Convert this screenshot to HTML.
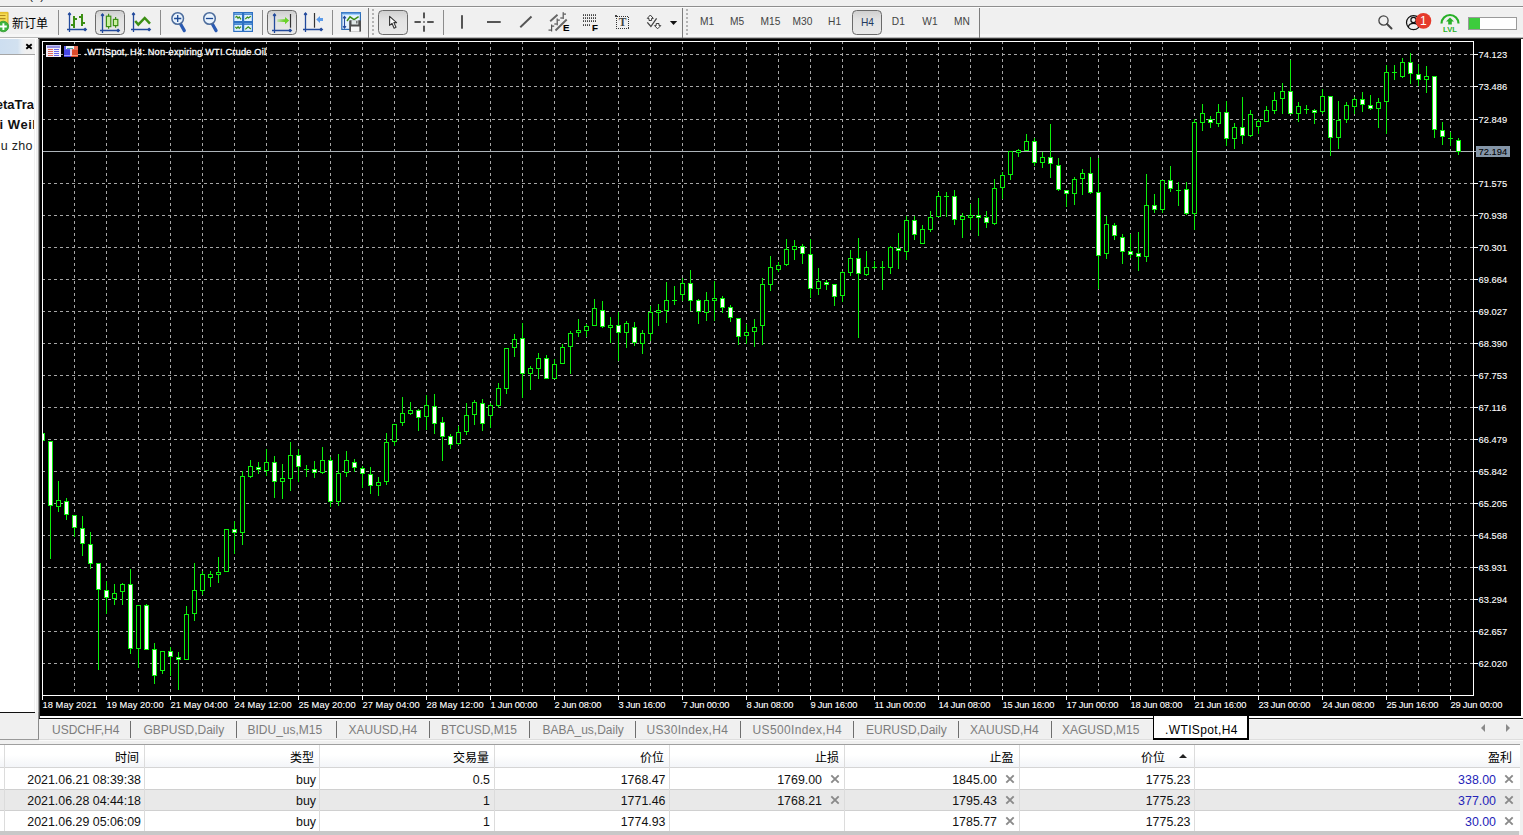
<!DOCTYPE html>
<html lang="zh"><head><meta charset="utf-8"><title>MetaTrader 4 - .WTISpot,H4</title>
<style>
html,body{margin:0;padding:0}
body{width:1523px;height:835px;overflow:hidden;background:#f0f0f0;position:relative;font-family:"Liberation Sans","Noto Sans CJK SC",sans-serif;font-size:12px;color:#000}
.abs{position:absolute}
.t{position:absolute;white-space:nowrap;line-height:1}
#chart{position:absolute;left:40px;top:39px;width:1481px;height:677px;background:#000}
#chart svg{position:absolute;left:-40px;top:-39px}
.ax{font-family:"Liberation Sans",sans-serif;font-size:9.33px;fill:#fff;stroke:#fff;stroke-width:0.1px}
.tab{position:absolute;top:724px;font-size:12px;color:#7d7d7d;white-space:nowrap;line-height:12px}
.sep{position:absolute;top:721px;width:1px;height:17px;background:#6e6e6e}
.tsep{position:absolute;top:9px;width:1px;height:28px;background:#a9a9a9}
.grip{position:absolute;top:9px;width:2px;height:27px;background:repeating-linear-gradient(to bottom,#b4b4b4 0 2px,transparent 2px 4px)}
.tf{position:absolute;top:16px;font-size:10.2px;color:#444;line-height:12px;white-space:nowrap;transform:translateX(-50%)}
.pressed{position:absolute;box-sizing:border-box;border:1.3px solid #6a6a6a;border-radius:4.5px;background:linear-gradient(#cfcfcf,#e2e2e2 35%,#e8e8e8)}
.hd{position:absolute;top:746.5px;height:22px;line-height:22px;font-size:12px;text-align:right;white-space:nowrap}
.cell{position:absolute;height:21px;line-height:21px;font-size:12.4px;text-align:right;white-space:nowrap;color:#111}
.x{position:absolute;font-size:0}
.vline{position:absolute;top:745px;width:1px;height:86px;background:#dcdcdc}
</style></head><body>

<div class="t" style="left:5px;top:-11px;font-size:12px;color:#222">文件(F)</div>
<div class="abs" style="left:0;top:6px;width:1523px;height:1px;background:#8e8e8e"></div>
<div class="abs" style="left:0;top:7px;width:1523px;height:1px;background:#fbfbfb"></div>
<div class="abs" style="left:0;top:34px;width:1523px;height:3px;background:#f6f6f6"></div>
<div class="abs" style="left:0;top:37px;width:1523px;height:1px;background:#b8b8b8"></div>
<div class="abs" style="left:38px;top:38px;width:1485px;height:1px;background:#404040"></div>
<div class="abs" style="left:0;top:38px;width:38px;height:1px;background:#fcfcfc"></div>
<div class="abs" style="left:1521px;top:39px;width:2px;height:680px;background:#fff"></div>
<div class="t" style="left:12px;top:17.500px;font-size:12px;color:#000">新订单</div>
<div class="tsep" style="left:58px;top:10px;height:25px;background:#8c8c8c"></div>
<div class="tsep" style="left:160px;top:10px;height:25px;background:#8c8c8c"></div>
<div class="tsep" style="left:262px;top:10px;height:25px;background:#8c8c8c"></div>
<div class="tsep" style="left:332px;top:10px;height:25px;background:#8c8c8c"></div>
<div class="tsep" style="left:443px;top:10px;height:25px;background:#8c8c8c"></div>
<div class="tsep" style="left:368px;top:8px;height:30px;background:#7c7c7c"></div>
<div class="tsep" style="left:682px;top:8px;height:30px;background:#7c7c7c"></div>
<div class="tsep" style="left:979px;top:8px;height:30px;background:#7c7c7c"></div>
<div class="grip" style="left:372px"></div>
<div class="grip" style="left:686px"></div>
<div class="pressed" style="left:95px;top:10px;width:30px;height:25px"></div>
<div class="pressed" style="left:267px;top:10px;width:30px;height:25px"></div>
<div class="pressed" style="left:378px;top:10px;width:30px;height:25px"></div>
<div class="pressed" style="left:852px;top:10px;width:30px;height:25px"></div>
<svg class="abs" style="left:0;top:0" width="1000" height="39" viewBox="0 0 1000 39"><path d="M-6 12.400H8V27H-6Z" fill="#f6dc55" stroke="#c9a41e" stroke-width="1"/><rect x="-2" y="12" width="10" height="1.600" fill="#e3bf2e"/><path d="M-4 15.500H5.500M-4 18.600H5.500" stroke="#b08a1c" stroke-width="1.100"/><circle cx="3.300" cy="26.500" r="5.300" fill="#3db43d" stroke="#2c962c" stroke-width="0.800"/><path d="M3.400 23.200V29.900M0 26.500H6.800" stroke="#fff" stroke-width="1.900"/><path d="M69.5 13.0V32.0M67.0 29.5H86.0" stroke="#224a9c" stroke-width="1.3" fill="none"/><path d="M69.5 11.899999999999999L71.4 14.3L69.5 16.1L67.6 14.3ZM87.3 29.5L85.1 31.4L83.1 29.5L85.1 27.6Z" fill="#224a9c"/><g fill="#3c8f14"><rect x="73" y="16" width="2" height="12"/><rect x="71" y="24" width="2" height="2"/><rect x="75" y="18" width="2" height="2"/><rect x="81" y="14" width="2" height="12"/><rect x="79" y="16" width="2" height="2"/><rect x="83" y="22" width="2" height="2"/></g><path d="M102.5 14.0V33.0M100.0 30.5H119.0" stroke="#224a9c" stroke-width="1.3" fill="none"/><path d="M102.5 12.899999999999999L104.4 15.3L102.5 17.1L100.6 15.3ZM120.3 30.5L118.1 32.4L116.1 30.5L118.1 28.6Z" fill="#224a9c"/><path d="M108.6 13.7V28.7M115.600 17V27.7" stroke="#3c8f14" stroke-width="1.2"/><rect x="106.4" y="16.2" width="4.4" height="10.400" fill="#c9f09f" stroke="#3c8f14" stroke-width="1.2"/><rect x="113.4" y="19.400" width="4.4" height="6.200" fill="#c9f09f" stroke="#3c8f14" stroke-width="1.2"/><path d="M133.5 13.0V32.0M131.0 29.5H150.0" stroke="#224a9c" stroke-width="1.3" fill="none"/><path d="M133.5 11.899999999999999L135.4 14.3L133.5 16.1L131.6 14.3ZM151.3 29.5L149.1 31.4L147.1 29.5L149.1 27.6Z" fill="#224a9c"/><path d="M135.2 21L138.3 24.600L144.7 18L150 23.600" stroke="#3c8f14" stroke-width="2.5" fill="none"/><path d="M180.7 24.2L184.29999999999998 30.6" stroke="#2a5ab2" stroke-width="3.2" stroke-linecap="round"/><circle cx="177.7" cy="18.5" r="5.800" fill="#e9f3fd" stroke="#4c6c9c" stroke-width="1.500"/><path d="M174.1 18.5H181.29999999999998M177.7 14.9V22.100" stroke="#1d4a96" stroke-width="1.3"/><path d="M212.5 24.2L216.1 30.6" stroke="#2a5ab2" stroke-width="3.2" stroke-linecap="round"/><circle cx="209.5" cy="18.5" r="5.800" fill="#e9f3fd" stroke="#4c6c9c" stroke-width="1.500"/><path d="M205.9 18.5H213.1" stroke="#1d4a96" stroke-width="1.3"/><rect x="233.2" y="12" width="19.800" height="20" fill="#2d70c2"/><rect x="234.4" y="14.8" width="7.600" height="6.2" fill="#def1ff"/><rect x="234.4" y="13.3" width="7.600" height="0.800" fill="#8cc4f4"/><rect x="244.2" y="14.8" width="7.600" height="6.2" fill="#def1ff"/><rect x="244.2" y="13.3" width="7.600" height="0.800" fill="#8cc4f4"/><rect x="234.4" y="25" width="7.600" height="5.8" fill="#def1ff"/><rect x="234.4" y="23.5" width="7.600" height="0.800" fill="#8cc4f4"/><rect x="244.2" y="25" width="7.600" height="5.8" fill="#def1ff"/><rect x="244.2" y="23.5" width="7.600" height="0.800" fill="#8cc4f4"/><path d="M235.4 17.5L236.800 16.300L238 18.200L239.300 16.900L241 19.300M245.300 19.200L247.400 17.100L248.400 18L250.800 16.200M235.400 27L236.800 28.400L238.100 26.700L239.200 28.400L241 26.600M245.300 29.400L248.200 26.700L250.800 29" stroke="#3c8f14" stroke-width="1.200" fill="none"/><path d="M274.5 14.0V33.0M272.0 30.5H291.0" stroke="#224a9c" stroke-width="1.3" fill="none"/><path d="M274.5 12.899999999999999L276.4 15.3L274.5 17.1L272.6 15.3ZM292.3 30.5L290.1 32.4L288.1 30.5L290.1 28.6Z" fill="#224a9c"/><path d="M290.5 14V27.700" stroke="#333" stroke-width="1.2"/><defs><linearGradient id="ga" x1="0" x2="1" y1="0" y2="0"><stop offset="0" stop-color="#6ad22a" stop-opacity="0.25"/><stop offset="0.6" stop-color="#6ad22a"/></linearGradient></defs><path d="M277.2 19.200H285V17L289.200 20.600L285 24.200V22H277.200Z" fill="url(#ga)"/><path d="M305.5 13.0V32.0M303.0 29.5H322.0" stroke="#224a9c" stroke-width="1.3" fill="none"/><path d="M305.5 11.899999999999999L307.4 14.3L305.5 16.1L303.6 14.3ZM323.3 29.5L321.1 31.4L319.1 29.5L321.1 27.6Z" fill="#224a9c"/><path d="M314.5 13V27.700" stroke="#333" stroke-width="1.2"/><path d="M316.200 19.500L320 16V18H323V21H320V23Z" fill="#5b9bea"/><rect x="341.800" y="12.600" width="18.600" height="16.800" fill="#e6f3ff" stroke="#2b6cb5" stroke-width="1.200"/><rect x="341.200" y="12" width="19.800" height="1.800" fill="#3a7cc8"/><rect x="342.400" y="13.800" width="17.400" height="1.300" fill="#9cd0ff"/><path d="M344.500 16.500V28M343 18.300L344.500 16.300L346 18.300M343 26.200L344.500 28.200L346 26.200" stroke="#224a9c" stroke-width="1.100" fill="none"/><path d="M347 21L350 16.800L354 19.600L358.600 16.600" stroke="#3c8f14" stroke-width="1.500" fill="none"/><rect x="349.200" y="20.200" width="11.800" height="11.500" rx="0.8" fill="#4d4d4d"/><rect x="351.500" y="20.200" width="6.800" height="4.300" fill="#dfe7e7"/><rect x="356.300" y="21" width="1.100" height="2.500" fill="#444"/><rect x="351" y="26.500" width="8.400" height="5.200" fill="#f6f6f6"/><path d="M389.600 16.400V25.400L392 23.300L394.100 28.200L396 27.300L393.900 22.600H396.600Z" fill="#fafafa" stroke="#333" stroke-width="1.100" stroke-linejoin="round"/><g fill="#555"><rect x="414.500" y="21" width="6.300" height="2"/><rect x="427.200" y="21" width="6.500" height="2"/><rect x="423" y="12.500" width="2" height="5.800"/><rect x="423" y="25.700" width="2" height="6"/><rect x="423.200" y="21.200" width="1.600" height="1.600"/></g><g fill="#555"><rect x="461" y="15.200" width="2" height="13.500"/><rect x="487" y="21" width="13.700" height="2"/></g><path d="M520.300 27.200L531.500 16.500" stroke="#555" stroke-width="1.900"/><path d="M550.200 21.200L557.500 14.700M555.500 30.500L566.700 19.500" stroke="#666" stroke-width="1.900"/><g fill="#555"><rect x="551" y="24.500" width="1.200" height="7"/><rect x="548.500" y="29.500" width="2.500" height="1.200"/><rect x="552" y="25.500" width="2.200" height="1.200"/><rect x="556.600" y="18.500" width="1.200" height="6.800"/><rect x="554.300" y="23.400" width="2.500" height="1.200"/><rect x="557.600" y="19.500" width="2.200" height="1.200"/><rect x="562.600" y="12.200" width="1.200" height="6.800"/><rect x="560.300" y="17.400" width="2.500" height="1.200"/><rect x="563.600" y="13.500" width="2.400" height="1.200"/></g><text x="563" y="30.800" font-family="Liberation Sans, sans-serif" font-weight="bold" font-size="9.7" fill="#000" stroke="#000" stroke-width="0.15">E</text><g fill="#444"><rect x="583" y="14.2" width="1" height="1.800"/><rect x="585" y="14.2" width="1" height="1.800"/><rect x="587" y="14.2" width="1" height="1.800"/><rect x="589" y="14.2" width="1" height="1.800"/><rect x="591" y="14.2" width="1" height="1.800"/><rect x="593" y="14.2" width="1" height="1.800"/><rect x="595" y="14.2" width="1" height="1.800"/><rect x="583" y="17.2" width="1" height="1.800"/><rect x="585" y="17.2" width="1" height="1.800"/><rect x="587" y="17.2" width="1" height="1.800"/><rect x="589" y="17.2" width="1" height="1.800"/><rect x="591" y="17.2" width="1" height="1.800"/><rect x="593" y="17.2" width="1" height="1.800"/><rect x="595" y="17.2" width="1" height="1.800"/><rect x="583" y="20.2" width="1" height="1.800"/><rect x="585" y="20.2" width="1" height="1.800"/><rect x="587" y="20.2" width="1" height="1.800"/><rect x="589" y="20.2" width="1" height="1.800"/><rect x="591" y="20.2" width="1" height="1.800"/><rect x="593" y="20.2" width="1" height="1.800"/><rect x="595" y="20.2" width="1" height="1.800"/><rect x="583" y="24.2" width="1" height="1.800"/><rect x="585" y="24.2" width="1" height="1.800"/><rect x="587" y="24.2" width="1" height="1.800"/><rect x="589" y="24.2" width="1" height="1.800"/></g><text x="592.100" y="30.800" font-family="Liberation Sans, sans-serif" font-weight="bold" font-size="9.7" fill="#000" stroke="#000" stroke-width="0.15">F</text><rect x="616.500" y="16.500" width="12" height="12" fill="none" stroke="#333" stroke-width="1" stroke-dasharray="1 1" shape-rendering="crispEdges"/><rect x="615" y="15" width="2" height="2" fill="#444"/><text x="622.600" y="25.900" text-anchor="middle" font-family="Liberation Serif, serif" font-weight="bold" font-size="11.500" fill="#444">T</text><path d="M647.300 22.300L650.900 26.500L656.600 18.400" stroke="#444" stroke-width="1.300" fill="none"/><path d="M650.300 15L653.300 18.400H651.600V20.500H649V18.400H647.300Z" fill="#f6f6f6" stroke="#3c3c3c" stroke-width="1"/><path d="M657.600 28.800L654.500 25.600H656.200V23.500H659V25.600H660.800Z" fill="#f6f6f6" stroke="#3c3c3c" stroke-width="1"/><path d="M669.900 21.100H677.200L673.550 25Z" fill="#111"/></svg>
<div class="tf" style="left:707px">M1</div>
<div class="tf" style="left:737px">M5</div>
<div class="tf" style="left:770.5px">M15</div>
<div class="tf" style="left:802.5px">M30</div>
<div class="tf" style="left:834.6px">H1</div>
<div class="tf" style="left:898.3px">D1</div>
<div class="tf" style="left:930px">W1</div>
<div class="tf" style="left:962px">MN</div>
<div class="tf" style="left:867.5px;top:17px;color:#1f3a5f">H4</div>
<svg class="abs" style="left:1376px;top:13px" width="18" height="18" viewBox="0 0 18 18">
<circle cx="7.5" cy="7.5" r="4.6" fill="none" stroke="#444" stroke-width="1.3"/><path d="M11 11L15.5 15.5" stroke="#444" stroke-width="2" stroke-linecap="round"/></svg>
<svg class="abs" style="left:1404px;top:11px" width="30" height="22" viewBox="0 0 30 22">
<circle cx="9.5" cy="11.6" r="7" fill="#f0f0f0" stroke="#111" stroke-width="1.2"/>
<circle cx="9.5" cy="9" r="2.6" fill="none" stroke="#111" stroke-width="1.2"/>
<path d="M4.3 16C5 13 7 12.3 9.5 12.3S14 13 14.7 16" fill="none" stroke="#111" stroke-width="1.2"/>
<circle cx="19.4" cy="9.8" r="7.9" fill="#e53a2b"/>
<text x="19.4" y="14.2" text-anchor="middle" font-family="Liberation Sans, sans-serif" font-size="12" fill="#fff">1</text>
</svg>
<svg class="abs" style="left:1439px;top:12px" width="22" height="21" viewBox="0 0 22 21">
<path d="M2.5 11.5A8.5 8.5 0 0 1 19.5 11.500" fill="none" stroke="#27b027" stroke-width="2.2"/>
<path d="M11 5.5L15 9.5H12.8V12.5H9.2V9.500H7Z" fill="#27b027"/>
<text x="11" y="20" text-anchor="middle" font-family="Liberation Sans, sans-serif" font-weight="bold" font-size="7.6" fill="#27b027">LVL</text>
</svg>
<div class="abs" style="left:1468px;top:17px;width:49px;height:13px;box-sizing:border-box;border:1px solid #9a9a9a;background:#fff"><div style="width:11px;height:11px;background:#3dcc3d"></div></div>
<div class="abs" style="left:0;top:39px;width:34px;height:673px;background:#fff"></div>
<div class="abs" style="left:35px;top:39px;width:1px;height:673px;background:#fff"></div>
<div class="abs" style="left:38px;top:39px;width:1px;height:673px;background:#a0a0a0"></div>
<div class="abs" style="left:39px;top:39px;width:1px;height:679px;background:#404040"></div>
<div class="abs" style="left:0;top:39px;width:34px;height:15px;background:linear-gradient(to right,#cddef0 0,#d2e1f0 52%,#e8eef4 64%,#f0f0f0 76%)"></div>
<div class="abs" style="left:0;top:54px;width:35px;height:1px;background:#a6a6a6"></div>
<svg class="abs" style="left:25px;top:43px" width="8" height="7" viewBox="0 0 8 7"><path d="M1.300 1.200L6.700 5.800M6.700 1.200L1.300 5.800" stroke="#000" stroke-width="1.900"/></svg>
<div class="abs" style="left:0;top:712px;width:35px;height:1px;background:#111"></div>
<div class="abs" style="left:38px;top:712px;width:1px;height:28px;background:#8a8a8a"></div>
<div class="abs" style="left:0;top:739px;width:39px;height:1px;background:#9a9a9a"></div>
<div class="abs" style="left:0;top:39px;width:34px;height:673px;overflow:hidden"><div class="t" style="right:0;top:59px;font-weight:bold;font-size:13px;color:#111">etaTra</div><div class="t" style="right:-2.500px;top:79px;font-weight:bold;font-size:13px;letter-spacing:0.55px;color:#111">i Weil</div><div class="t" style="right:1.300px;top:100.500px;font-size:12.5px;letter-spacing:0.25px;color:#222">u zho</div></div>
<div id="chart"><svg width="1523" height="835" viewBox="0 0 1523 835">
<g stroke="#a6a6a6" stroke-width="1" stroke-dasharray="3 3" shape-rendering="crispEdges">
<line x1="74.5" y1="41" x2="74.5" y2="695"/>
<line x1="106.5" y1="41" x2="106.5" y2="695"/>
<line x1="138.5" y1="41" x2="138.5" y2="695"/>
<line x1="170.5" y1="41" x2="170.5" y2="695"/>
<line x1="202.5" y1="41" x2="202.5" y2="695"/>
<line x1="234.5" y1="41" x2="234.5" y2="695"/>
<line x1="266.5" y1="41" x2="266.5" y2="695"/>
<line x1="298.5" y1="41" x2="298.5" y2="695"/>
<line x1="330.5" y1="41" x2="330.5" y2="695"/>
<line x1="362.5" y1="41" x2="362.5" y2="695"/>
<line x1="394.5" y1="41" x2="394.5" y2="695"/>
<line x1="426.5" y1="41" x2="426.5" y2="695"/>
<line x1="458.5" y1="41" x2="458.5" y2="695"/>
<line x1="490.5" y1="41" x2="490.5" y2="695"/>
<line x1="522.5" y1="41" x2="522.5" y2="695"/>
<line x1="554.5" y1="41" x2="554.5" y2="695"/>
<line x1="586.5" y1="41" x2="586.5" y2="695"/>
<line x1="618.5" y1="41" x2="618.5" y2="695"/>
<line x1="650.5" y1="41" x2="650.5" y2="695"/>
<line x1="682.5" y1="41" x2="682.5" y2="695"/>
<line x1="714.5" y1="41" x2="714.5" y2="695"/>
<line x1="746.5" y1="41" x2="746.5" y2="695"/>
<line x1="778.5" y1="41" x2="778.5" y2="695"/>
<line x1="810.5" y1="41" x2="810.5" y2="695"/>
<line x1="842.5" y1="41" x2="842.5" y2="695"/>
<line x1="874.5" y1="41" x2="874.5" y2="695"/>
<line x1="906.5" y1="41" x2="906.5" y2="695"/>
<line x1="938.5" y1="41" x2="938.5" y2="695"/>
<line x1="970.5" y1="41" x2="970.5" y2="695"/>
<line x1="1002.5" y1="41" x2="1002.5" y2="695"/>
<line x1="1034.5" y1="41" x2="1034.5" y2="695"/>
<line x1="1066.5" y1="41" x2="1066.5" y2="695"/>
<line x1="1098.5" y1="41" x2="1098.5" y2="695"/>
<line x1="1130.5" y1="41" x2="1130.5" y2="695"/>
<line x1="1162.5" y1="41" x2="1162.5" y2="695"/>
<line x1="1194.5" y1="41" x2="1194.5" y2="695"/>
<line x1="1226.5" y1="41" x2="1226.5" y2="695"/>
<line x1="1258.5" y1="41" x2="1258.5" y2="695"/>
<line x1="1290.5" y1="41" x2="1290.5" y2="695"/>
<line x1="1322.5" y1="41" x2="1322.5" y2="695"/>
<line x1="1354.5" y1="41" x2="1354.5" y2="695"/>
<line x1="1386.5" y1="41" x2="1386.5" y2="695"/>
<line x1="1418.5" y1="41" x2="1418.5" y2="695"/>
<line x1="1450.5" y1="41" x2="1450.5" y2="695"/>
<line x1="42" y1="54.5" x2="1473" y2="54.5"/>
<line x1="42" y1="86.5" x2="1473" y2="86.5"/>
<line x1="42" y1="119.5" x2="1473" y2="119.5"/>
<line x1="42" y1="151.5" x2="1473" y2="151.5"/>
<line x1="42" y1="183.5" x2="1473" y2="183.5"/>
<line x1="42" y1="215.5" x2="1473" y2="215.5"/>
<line x1="42" y1="247.5" x2="1473" y2="247.5"/>
<line x1="42" y1="279.5" x2="1473" y2="279.5"/>
<line x1="42" y1="311.5" x2="1473" y2="311.5"/>
<line x1="42" y1="343.5" x2="1473" y2="343.5"/>
<line x1="42" y1="375.5" x2="1473" y2="375.5"/>
<line x1="42" y1="407.5" x2="1473" y2="407.5"/>
<line x1="42" y1="439.5" x2="1473" y2="439.5"/>
<line x1="42" y1="471.5" x2="1473" y2="471.5"/>
<line x1="42" y1="503.5" x2="1473" y2="503.5"/>
<line x1="42" y1="535.5" x2="1473" y2="535.5"/>
<line x1="42" y1="567.5" x2="1473" y2="567.5"/>
<line x1="42" y1="599.5" x2="1473" y2="599.5"/>
<line x1="42" y1="631.5" x2="1473" y2="631.5"/>
<line x1="42" y1="663.5" x2="1473" y2="663.5"/>
</g>
<rect x="43" y="151" width="1433" height="1" fill="#adb3b9" shape-rendering="crispEdges"/>
<g shape-rendering="crispEdges">
<rect x="42" y="433" width="1" height="8" fill="#0bef0b"/>
<rect x="42" y="433" width="3" height="8" fill="#0bef0b"/>
<rect x="43" y="434" width="1" height="6" fill="#fff"/>
<rect x="50" y="441" width="1" height="118" fill="#0bef0b"/>
<rect x="48" y="441" width="5" height="65" fill="#0bef0b"/>
<rect x="49" y="442" width="3" height="63" fill="#fff"/>
<rect x="58" y="481" width="1" height="31" fill="#0bef0b"/>
<rect x="56" y="500" width="5" height="7" fill="#0bef0b"/>
<rect x="57" y="501" width="3" height="5" fill="#000"/>
<rect x="66" y="498" width="1" height="22" fill="#0bef0b"/>
<rect x="64" y="501" width="5" height="14" fill="#0bef0b"/>
<rect x="65" y="502" width="3" height="12" fill="#fff"/>
<rect x="74" y="515" width="1" height="22" fill="#0bef0b"/>
<rect x="72" y="515" width="5" height="13" fill="#0bef0b"/>
<rect x="73" y="516" width="3" height="11" fill="#fff"/>
<rect x="82" y="516" width="1" height="40" fill="#0bef0b"/>
<rect x="80" y="528" width="5" height="16" fill="#0bef0b"/>
<rect x="81" y="529" width="3" height="14" fill="#fff"/>
<rect x="90" y="532" width="1" height="37" fill="#0bef0b"/>
<rect x="88" y="544" width="5" height="20" fill="#0bef0b"/>
<rect x="89" y="545" width="3" height="18" fill="#fff"/>
<rect x="98" y="563" width="1" height="107" fill="#0bef0b"/>
<rect x="96" y="563" width="5" height="27" fill="#0bef0b"/>
<rect x="97" y="564" width="3" height="25" fill="#fff"/>
<rect x="106" y="581" width="1" height="33" fill="#0bef0b"/>
<rect x="104" y="590" width="5" height="8" fill="#0bef0b"/>
<rect x="105" y="591" width="3" height="6" fill="#fff"/>
<rect x="114" y="584" width="1" height="21" fill="#0bef0b"/>
<rect x="112" y="593" width="5" height="6" fill="#0bef0b"/>
<rect x="113" y="594" width="3" height="4" fill="#000"/>
<rect x="122" y="583" width="1" height="22" fill="#0bef0b"/>
<rect x="120" y="584" width="5" height="8" fill="#0bef0b"/>
<rect x="121" y="585" width="3" height="6" fill="#000"/>
<rect x="130" y="569" width="1" height="85" fill="#0bef0b"/>
<rect x="128" y="584" width="5" height="65" fill="#0bef0b"/>
<rect x="129" y="585" width="3" height="63" fill="#fff"/>
<rect x="138" y="605" width="1" height="63" fill="#0bef0b"/>
<rect x="136" y="605" width="5" height="44" fill="#0bef0b"/>
<rect x="137" y="606" width="3" height="42" fill="#000"/>
<rect x="146" y="604" width="1" height="46" fill="#0bef0b"/>
<rect x="144" y="605" width="5" height="45" fill="#0bef0b"/>
<rect x="145" y="606" width="3" height="43" fill="#fff"/>
<rect x="154" y="643" width="1" height="41" fill="#0bef0b"/>
<rect x="152" y="649" width="5" height="27" fill="#0bef0b"/>
<rect x="153" y="650" width="3" height="25" fill="#fff"/>
<rect x="162" y="651" width="1" height="23" fill="#0bef0b"/>
<rect x="160" y="651" width="5" height="20" fill="#0bef0b"/>
<rect x="161" y="652" width="3" height="18" fill="#000"/>
<rect x="170" y="647" width="1" height="29" fill="#0bef0b"/>
<rect x="168" y="651" width="5" height="6" fill="#0bef0b"/>
<rect x="169" y="652" width="3" height="4" fill="#fff"/>
<rect x="178" y="652" width="1" height="38" fill="#0bef0b"/>
<rect x="176" y="657" width="5" height="3" fill="#0bef0b"/>
<rect x="177" y="658" width="3" height="1" fill="#fff"/>
<rect x="186" y="606" width="1" height="54" fill="#0bef0b"/>
<rect x="184" y="614" width="5" height="46" fill="#0bef0b"/>
<rect x="185" y="615" width="3" height="44" fill="#000"/>
<rect x="194" y="563" width="1" height="58" fill="#0bef0b"/>
<rect x="192" y="590" width="5" height="24" fill="#0bef0b"/>
<rect x="193" y="591" width="3" height="22" fill="#000"/>
<rect x="202" y="571" width="1" height="24" fill="#0bef0b"/>
<rect x="200" y="574" width="5" height="17" fill="#0bef0b"/>
<rect x="201" y="575" width="3" height="15" fill="#000"/>
<rect x="210" y="571" width="1" height="16" fill="#0bef0b"/>
<rect x="208" y="574" width="5" height="4" fill="#0bef0b"/>
<rect x="209" y="575" width="3" height="2" fill="#000"/>
<rect x="218" y="557" width="1" height="26" fill="#0bef0b"/>
<rect x="216" y="572" width="5" height="3" fill="#0bef0b"/>
<rect x="217" y="573" width="3" height="1" fill="#000"/>
<rect x="226" y="529" width="1" height="43" fill="#0bef0b"/>
<rect x="224" y="529" width="5" height="43" fill="#0bef0b"/>
<rect x="225" y="530" width="3" height="41" fill="#000"/>
<rect x="234" y="521" width="1" height="33" fill="#0bef0b"/>
<rect x="232" y="529" width="5" height="4" fill="#0bef0b"/>
<rect x="233" y="530" width="3" height="2" fill="#fff"/>
<rect x="242" y="471" width="1" height="74" fill="#0bef0b"/>
<rect x="240" y="476" width="5" height="57" fill="#0bef0b"/>
<rect x="241" y="477" width="3" height="55" fill="#000"/>
<rect x="250" y="460" width="1" height="18" fill="#0bef0b"/>
<rect x="248" y="466" width="5" height="11" fill="#0bef0b"/>
<rect x="249" y="467" width="3" height="9" fill="#000"/>
<rect x="258" y="462" width="1" height="12" fill="#0bef0b"/>
<rect x="256" y="467" width="5" height="3" fill="#0bef0b"/>
<rect x="257" y="468" width="3" height="1" fill="#fff"/>
<rect x="266" y="449" width="1" height="27" fill="#0bef0b"/>
<rect x="264" y="462" width="5" height="9" fill="#0bef0b"/>
<rect x="265" y="463" width="3" height="7" fill="#000"/>
<rect x="274" y="456" width="1" height="42" fill="#0bef0b"/>
<rect x="272" y="462" width="5" height="20" fill="#0bef0b"/>
<rect x="273" y="463" width="3" height="18" fill="#fff"/>
<rect x="282" y="464" width="1" height="35" fill="#0bef0b"/>
<rect x="280" y="478" width="5" height="4" fill="#0bef0b"/>
<rect x="281" y="479" width="3" height="2" fill="#000"/>
<rect x="290" y="442" width="1" height="49" fill="#0bef0b"/>
<rect x="288" y="455" width="5" height="24" fill="#0bef0b"/>
<rect x="289" y="456" width="3" height="22" fill="#000"/>
<rect x="298" y="449" width="1" height="33" fill="#0bef0b"/>
<rect x="296" y="455" width="5" height="12" fill="#0bef0b"/>
<rect x="297" y="456" width="3" height="10" fill="#fff"/>
<rect x="306" y="465" width="1" height="12" fill="#0bef0b"/>
<rect x="304" y="469" width="5" height="1" fill="#0bef0b"/>
<rect x="314" y="461" width="1" height="17" fill="#0bef0b"/>
<rect x="312" y="469" width="5" height="4" fill="#0bef0b"/>
<rect x="313" y="470" width="3" height="2" fill="#fff"/>
<rect x="322" y="447" width="1" height="27" fill="#0bef0b"/>
<rect x="320" y="460" width="5" height="13" fill="#0bef0b"/>
<rect x="321" y="461" width="3" height="11" fill="#000"/>
<rect x="330" y="457" width="1" height="50" fill="#0bef0b"/>
<rect x="328" y="460" width="5" height="42" fill="#0bef0b"/>
<rect x="329" y="461" width="3" height="40" fill="#fff"/>
<rect x="338" y="454" width="1" height="52" fill="#0bef0b"/>
<rect x="336" y="473" width="5" height="29" fill="#0bef0b"/>
<rect x="337" y="474" width="3" height="27" fill="#000"/>
<rect x="346" y="451" width="1" height="26" fill="#0bef0b"/>
<rect x="344" y="460" width="5" height="13" fill="#0bef0b"/>
<rect x="345" y="461" width="3" height="11" fill="#000"/>
<rect x="354" y="459" width="1" height="13" fill="#0bef0b"/>
<rect x="352" y="462" width="5" height="6" fill="#0bef0b"/>
<rect x="353" y="463" width="3" height="4" fill="#fff"/>
<rect x="362" y="466" width="1" height="22" fill="#0bef0b"/>
<rect x="360" y="468" width="5" height="6" fill="#0bef0b"/>
<rect x="361" y="469" width="3" height="4" fill="#fff"/>
<rect x="370" y="467" width="1" height="27" fill="#0bef0b"/>
<rect x="368" y="474" width="5" height="12" fill="#0bef0b"/>
<rect x="369" y="475" width="3" height="10" fill="#fff"/>
<rect x="378" y="477" width="1" height="19" fill="#0bef0b"/>
<rect x="376" y="482" width="5" height="4" fill="#0bef0b"/>
<rect x="377" y="483" width="3" height="2" fill="#000"/>
<rect x="386" y="433" width="1" height="52" fill="#0bef0b"/>
<rect x="384" y="442" width="5" height="40" fill="#0bef0b"/>
<rect x="385" y="443" width="3" height="38" fill="#000"/>
<rect x="394" y="424" width="1" height="22" fill="#0bef0b"/>
<rect x="392" y="424" width="5" height="18" fill="#0bef0b"/>
<rect x="393" y="425" width="3" height="16" fill="#000"/>
<rect x="402" y="397" width="1" height="29" fill="#0bef0b"/>
<rect x="400" y="413" width="5" height="10" fill="#0bef0b"/>
<rect x="401" y="414" width="3" height="8" fill="#000"/>
<rect x="410" y="402" width="1" height="13" fill="#0bef0b"/>
<rect x="408" y="410" width="5" height="4" fill="#0bef0b"/>
<rect x="409" y="411" width="3" height="2" fill="#000"/>
<rect x="418" y="409" width="1" height="22" fill="#0bef0b"/>
<rect x="416" y="410" width="5" height="8" fill="#0bef0b"/>
<rect x="417" y="411" width="3" height="6" fill="#fff"/>
<rect x="426" y="395" width="1" height="35" fill="#0bef0b"/>
<rect x="424" y="405" width="5" height="12" fill="#0bef0b"/>
<rect x="425" y="406" width="3" height="10" fill="#000"/>
<rect x="434" y="394" width="1" height="40" fill="#0bef0b"/>
<rect x="432" y="406" width="5" height="18" fill="#0bef0b"/>
<rect x="433" y="407" width="3" height="16" fill="#fff"/>
<rect x="442" y="417" width="1" height="44" fill="#0bef0b"/>
<rect x="440" y="422" width="5" height="15" fill="#0bef0b"/>
<rect x="441" y="423" width="3" height="13" fill="#fff"/>
<rect x="450" y="434" width="1" height="15" fill="#0bef0b"/>
<rect x="448" y="436" width="5" height="9" fill="#0bef0b"/>
<rect x="449" y="437" width="3" height="7" fill="#fff"/>
<rect x="458" y="426" width="1" height="19" fill="#0bef0b"/>
<rect x="456" y="432" width="5" height="12" fill="#0bef0b"/>
<rect x="457" y="433" width="3" height="10" fill="#000"/>
<rect x="466" y="403" width="1" height="32" fill="#0bef0b"/>
<rect x="464" y="415" width="5" height="17" fill="#0bef0b"/>
<rect x="465" y="416" width="3" height="15" fill="#000"/>
<rect x="474" y="400" width="1" height="25" fill="#0bef0b"/>
<rect x="472" y="402" width="5" height="13" fill="#0bef0b"/>
<rect x="473" y="403" width="3" height="11" fill="#000"/>
<rect x="482" y="399" width="1" height="32" fill="#0bef0b"/>
<rect x="480" y="403" width="5" height="21" fill="#0bef0b"/>
<rect x="481" y="404" width="3" height="19" fill="#fff"/>
<rect x="490" y="403" width="1" height="25" fill="#0bef0b"/>
<rect x="488" y="405" width="5" height="11" fill="#0bef0b"/>
<rect x="489" y="406" width="3" height="9" fill="#000"/>
<rect x="498" y="383" width="1" height="25" fill="#0bef0b"/>
<rect x="496" y="388" width="5" height="18" fill="#0bef0b"/>
<rect x="497" y="389" width="3" height="16" fill="#000"/>
<rect x="506" y="348" width="1" height="46" fill="#0bef0b"/>
<rect x="504" y="348" width="5" height="41" fill="#0bef0b"/>
<rect x="505" y="349" width="3" height="39" fill="#000"/>
<rect x="514" y="334" width="1" height="23" fill="#0bef0b"/>
<rect x="512" y="339" width="5" height="9" fill="#0bef0b"/>
<rect x="513" y="340" width="3" height="7" fill="#000"/>
<rect x="522" y="323" width="1" height="75" fill="#0bef0b"/>
<rect x="520" y="338" width="5" height="36" fill="#0bef0b"/>
<rect x="521" y="339" width="3" height="34" fill="#fff"/>
<rect x="530" y="366" width="1" height="24" fill="#0bef0b"/>
<rect x="528" y="368" width="5" height="6" fill="#0bef0b"/>
<rect x="529" y="369" width="3" height="4" fill="#000"/>
<rect x="538" y="353" width="1" height="26" fill="#0bef0b"/>
<rect x="536" y="358" width="5" height="11" fill="#0bef0b"/>
<rect x="537" y="359" width="3" height="9" fill="#000"/>
<rect x="546" y="355" width="1" height="24" fill="#0bef0b"/>
<rect x="544" y="358" width="5" height="21" fill="#0bef0b"/>
<rect x="545" y="359" width="3" height="19" fill="#fff"/>
<rect x="554" y="359" width="1" height="20" fill="#0bef0b"/>
<rect x="552" y="364" width="5" height="15" fill="#0bef0b"/>
<rect x="553" y="365" width="3" height="13" fill="#000"/>
<rect x="562" y="344" width="1" height="20" fill="#0bef0b"/>
<rect x="560" y="347" width="5" height="17" fill="#0bef0b"/>
<rect x="561" y="348" width="3" height="15" fill="#000"/>
<rect x="570" y="331" width="1" height="43" fill="#0bef0b"/>
<rect x="568" y="333" width="5" height="14" fill="#0bef0b"/>
<rect x="569" y="334" width="3" height="12" fill="#000"/>
<rect x="578" y="319" width="1" height="18" fill="#0bef0b"/>
<rect x="576" y="330" width="5" height="3" fill="#0bef0b"/>
<rect x="577" y="331" width="3" height="1" fill="#000"/>
<rect x="586" y="324" width="1" height="13" fill="#0bef0b"/>
<rect x="584" y="326" width="5" height="5" fill="#0bef0b"/>
<rect x="585" y="327" width="3" height="3" fill="#000"/>
<rect x="594" y="299" width="1" height="27" fill="#0bef0b"/>
<rect x="592" y="308" width="5" height="18" fill="#0bef0b"/>
<rect x="593" y="309" width="3" height="16" fill="#000"/>
<rect x="602" y="301" width="1" height="27" fill="#0bef0b"/>
<rect x="600" y="310" width="5" height="17" fill="#0bef0b"/>
<rect x="601" y="311" width="3" height="15" fill="#fff"/>
<rect x="610" y="317" width="1" height="26" fill="#0bef0b"/>
<rect x="608" y="325" width="5" height="3" fill="#0bef0b"/>
<rect x="609" y="326" width="3" height="1" fill="#000"/>
<rect x="618" y="312" width="1" height="49" fill="#0bef0b"/>
<rect x="616" y="325" width="5" height="8" fill="#0bef0b"/>
<rect x="617" y="326" width="3" height="6" fill="#fff"/>
<rect x="626" y="321" width="1" height="27" fill="#0bef0b"/>
<rect x="624" y="323" width="5" height="10" fill="#0bef0b"/>
<rect x="625" y="324" width="3" height="8" fill="#000"/>
<rect x="634" y="322" width="1" height="24" fill="#0bef0b"/>
<rect x="632" y="327" width="5" height="16" fill="#0bef0b"/>
<rect x="633" y="328" width="3" height="14" fill="#fff"/>
<rect x="642" y="330" width="1" height="24" fill="#0bef0b"/>
<rect x="640" y="333" width="5" height="11" fill="#0bef0b"/>
<rect x="641" y="334" width="3" height="9" fill="#000"/>
<rect x="650" y="306" width="1" height="35" fill="#0bef0b"/>
<rect x="648" y="312" width="5" height="22" fill="#0bef0b"/>
<rect x="649" y="313" width="3" height="20" fill="#000"/>
<rect x="658" y="304" width="1" height="22" fill="#0bef0b"/>
<rect x="656" y="310" width="5" height="3" fill="#0bef0b"/>
<rect x="657" y="311" width="3" height="1" fill="#000"/>
<rect x="666" y="282" width="1" height="41" fill="#0bef0b"/>
<rect x="664" y="300" width="5" height="11" fill="#0bef0b"/>
<rect x="665" y="301" width="3" height="9" fill="#000"/>
<rect x="674" y="286" width="1" height="19" fill="#0bef0b"/>
<rect x="672" y="300" width="5" height="1" fill="#0bef0b"/>
<rect x="682" y="278" width="1" height="23" fill="#0bef0b"/>
<rect x="680" y="283" width="5" height="12" fill="#0bef0b"/>
<rect x="681" y="284" width="3" height="10" fill="#000"/>
<rect x="690" y="270" width="1" height="41" fill="#0bef0b"/>
<rect x="688" y="283" width="5" height="18" fill="#0bef0b"/>
<rect x="689" y="284" width="3" height="16" fill="#fff"/>
<rect x="698" y="299" width="1" height="25" fill="#0bef0b"/>
<rect x="696" y="300" width="5" height="12" fill="#0bef0b"/>
<rect x="697" y="301" width="3" height="10" fill="#fff"/>
<rect x="706" y="292" width="1" height="29" fill="#0bef0b"/>
<rect x="704" y="300" width="5" height="13" fill="#0bef0b"/>
<rect x="705" y="301" width="3" height="11" fill="#000"/>
<rect x="714" y="281" width="1" height="40" fill="#0bef0b"/>
<rect x="712" y="298" width="5" height="3" fill="#0bef0b"/>
<rect x="713" y="299" width="3" height="1" fill="#000"/>
<rect x="722" y="296" width="1" height="17" fill="#0bef0b"/>
<rect x="720" y="298" width="5" height="10" fill="#0bef0b"/>
<rect x="721" y="299" width="3" height="8" fill="#fff"/>
<rect x="730" y="305" width="1" height="17" fill="#0bef0b"/>
<rect x="728" y="307" width="5" height="11" fill="#0bef0b"/>
<rect x="729" y="308" width="3" height="9" fill="#fff"/>
<rect x="738" y="318" width="1" height="27" fill="#0bef0b"/>
<rect x="736" y="318" width="5" height="19" fill="#0bef0b"/>
<rect x="737" y="319" width="3" height="17" fill="#fff"/>
<rect x="746" y="324" width="1" height="20" fill="#0bef0b"/>
<rect x="744" y="332" width="5" height="4" fill="#0bef0b"/>
<rect x="745" y="333" width="3" height="2" fill="#000"/>
<rect x="754" y="319" width="1" height="28" fill="#0bef0b"/>
<rect x="752" y="327" width="5" height="5" fill="#0bef0b"/>
<rect x="753" y="328" width="3" height="3" fill="#000"/>
<rect x="762" y="278" width="1" height="67" fill="#0bef0b"/>
<rect x="760" y="284" width="5" height="42" fill="#0bef0b"/>
<rect x="761" y="285" width="3" height="40" fill="#000"/>
<rect x="770" y="256" width="1" height="35" fill="#0bef0b"/>
<rect x="768" y="267" width="5" height="18" fill="#0bef0b"/>
<rect x="769" y="268" width="3" height="16" fill="#000"/>
<rect x="778" y="262" width="1" height="10" fill="#0bef0b"/>
<rect x="776" y="265" width="5" height="5" fill="#0bef0b"/>
<rect x="777" y="266" width="3" height="3" fill="#000"/>
<rect x="786" y="239" width="1" height="27" fill="#0bef0b"/>
<rect x="784" y="249" width="5" height="16" fill="#0bef0b"/>
<rect x="785" y="250" width="3" height="14" fill="#000"/>
<rect x="794" y="240" width="1" height="20" fill="#0bef0b"/>
<rect x="792" y="246" width="5" height="4" fill="#0bef0b"/>
<rect x="793" y="247" width="3" height="2" fill="#000"/>
<rect x="802" y="244" width="1" height="20" fill="#0bef0b"/>
<rect x="800" y="246" width="5" height="8" fill="#0bef0b"/>
<rect x="801" y="247" width="3" height="6" fill="#fff"/>
<rect x="810" y="239" width="1" height="59" fill="#0bef0b"/>
<rect x="808" y="254" width="5" height="35" fill="#0bef0b"/>
<rect x="809" y="255" width="3" height="33" fill="#fff"/>
<rect x="818" y="268" width="1" height="27" fill="#0bef0b"/>
<rect x="816" y="281" width="5" height="8" fill="#0bef0b"/>
<rect x="817" y="282" width="3" height="6" fill="#000"/>
<rect x="826" y="280" width="1" height="10" fill="#0bef0b"/>
<rect x="824" y="282" width="5" height="3" fill="#0bef0b"/>
<rect x="825" y="283" width="3" height="1" fill="#fff"/>
<rect x="834" y="284" width="1" height="22" fill="#0bef0b"/>
<rect x="832" y="284" width="5" height="13" fill="#0bef0b"/>
<rect x="833" y="285" width="3" height="11" fill="#fff"/>
<rect x="842" y="271" width="1" height="31" fill="#0bef0b"/>
<rect x="840" y="272" width="5" height="24" fill="#0bef0b"/>
<rect x="841" y="273" width="3" height="22" fill="#000"/>
<rect x="850" y="250" width="1" height="26" fill="#0bef0b"/>
<rect x="848" y="258" width="5" height="15" fill="#0bef0b"/>
<rect x="849" y="259" width="3" height="13" fill="#000"/>
<rect x="858" y="238" width="1" height="100" fill="#0bef0b"/>
<rect x="856" y="258" width="5" height="16" fill="#0bef0b"/>
<rect x="857" y="259" width="3" height="14" fill="#fff"/>
<rect x="866" y="251" width="1" height="25" fill="#0bef0b"/>
<rect x="864" y="267" width="5" height="8" fill="#0bef0b"/>
<rect x="865" y="268" width="3" height="6" fill="#000"/>
<rect x="874" y="261" width="1" height="8" fill="#0bef0b"/>
<rect x="872" y="267" width="5" height="1" fill="#0bef0b"/>
<rect x="882" y="261" width="1" height="29" fill="#0bef0b"/>
<rect x="880" y="267" width="5" height="1" fill="#0bef0b"/>
<rect x="890" y="246" width="1" height="28" fill="#0bef0b"/>
<rect x="888" y="247" width="5" height="21" fill="#0bef0b"/>
<rect x="889" y="248" width="3" height="19" fill="#000"/>
<rect x="898" y="233" width="1" height="36" fill="#0bef0b"/>
<rect x="896" y="248" width="5" height="3" fill="#0bef0b"/>
<rect x="897" y="249" width="3" height="1" fill="#fff"/>
<rect x="906" y="216" width="1" height="44" fill="#0bef0b"/>
<rect x="904" y="220" width="5" height="32" fill="#0bef0b"/>
<rect x="905" y="221" width="3" height="30" fill="#000"/>
<rect x="914" y="216" width="1" height="24" fill="#0bef0b"/>
<rect x="912" y="220" width="5" height="15" fill="#0bef0b"/>
<rect x="913" y="221" width="3" height="13" fill="#fff"/>
<rect x="922" y="225" width="1" height="19" fill="#0bef0b"/>
<rect x="920" y="229" width="5" height="15" fill="#0bef0b"/>
<rect x="921" y="230" width="3" height="13" fill="#000"/>
<rect x="930" y="211" width="1" height="21" fill="#0bef0b"/>
<rect x="928" y="217" width="5" height="13" fill="#0bef0b"/>
<rect x="929" y="218" width="3" height="11" fill="#000"/>
<rect x="938" y="192" width="1" height="25" fill="#0bef0b"/>
<rect x="936" y="196" width="5" height="21" fill="#0bef0b"/>
<rect x="937" y="197" width="3" height="19" fill="#000"/>
<rect x="946" y="192" width="1" height="25" fill="#0bef0b"/>
<rect x="944" y="196" width="5" height="1" fill="#0bef0b"/>
<rect x="954" y="190" width="1" height="35" fill="#0bef0b"/>
<rect x="952" y="196" width="5" height="24" fill="#0bef0b"/>
<rect x="953" y="197" width="3" height="22" fill="#fff"/>
<rect x="962" y="213" width="1" height="25" fill="#0bef0b"/>
<rect x="960" y="216" width="5" height="4" fill="#0bef0b"/>
<rect x="961" y="217" width="3" height="2" fill="#000"/>
<rect x="970" y="204" width="1" height="26" fill="#0bef0b"/>
<rect x="968" y="215" width="5" height="3" fill="#0bef0b"/>
<rect x="969" y="216" width="3" height="1" fill="#000"/>
<rect x="978" y="198" width="1" height="38" fill="#0bef0b"/>
<rect x="976" y="215" width="5" height="3" fill="#0bef0b"/>
<rect x="977" y="216" width="3" height="1" fill="#fff"/>
<rect x="986" y="211" width="1" height="17" fill="#0bef0b"/>
<rect x="984" y="217" width="5" height="6" fill="#0bef0b"/>
<rect x="985" y="218" width="3" height="4" fill="#fff"/>
<rect x="994" y="179" width="1" height="46" fill="#0bef0b"/>
<rect x="992" y="188" width="5" height="36" fill="#0bef0b"/>
<rect x="993" y="189" width="3" height="34" fill="#000"/>
<rect x="1002" y="172" width="1" height="27" fill="#0bef0b"/>
<rect x="1000" y="175" width="5" height="13" fill="#0bef0b"/>
<rect x="1001" y="176" width="3" height="11" fill="#000"/>
<rect x="1010" y="151" width="1" height="29" fill="#0bef0b"/>
<rect x="1008" y="151" width="5" height="24" fill="#0bef0b"/>
<rect x="1009" y="152" width="3" height="22" fill="#000"/>
<rect x="1018" y="149" width="1" height="8" fill="#0bef0b"/>
<rect x="1016" y="150" width="5" height="3" fill="#0bef0b"/>
<rect x="1017" y="151" width="3" height="1" fill="#000"/>
<rect x="1026" y="134" width="1" height="17" fill="#0bef0b"/>
<rect x="1024" y="141" width="5" height="10" fill="#0bef0b"/>
<rect x="1025" y="142" width="3" height="8" fill="#000"/>
<rect x="1034" y="138" width="1" height="28" fill="#0bef0b"/>
<rect x="1032" y="141" width="5" height="22" fill="#0bef0b"/>
<rect x="1033" y="142" width="3" height="20" fill="#fff"/>
<rect x="1042" y="152" width="1" height="16" fill="#0bef0b"/>
<rect x="1040" y="157" width="5" height="6" fill="#0bef0b"/>
<rect x="1041" y="158" width="3" height="4" fill="#000"/>
<rect x="1050" y="124" width="1" height="54" fill="#0bef0b"/>
<rect x="1048" y="157" width="5" height="7" fill="#0bef0b"/>
<rect x="1049" y="158" width="3" height="5" fill="#fff"/>
<rect x="1058" y="158" width="1" height="33" fill="#0bef0b"/>
<rect x="1056" y="165" width="5" height="25" fill="#0bef0b"/>
<rect x="1057" y="166" width="3" height="23" fill="#fff"/>
<rect x="1066" y="190" width="1" height="17" fill="#0bef0b"/>
<rect x="1064" y="190" width="5" height="4" fill="#0bef0b"/>
<rect x="1065" y="191" width="3" height="2" fill="#fff"/>
<rect x="1074" y="177" width="1" height="28" fill="#0bef0b"/>
<rect x="1072" y="179" width="5" height="15" fill="#0bef0b"/>
<rect x="1073" y="180" width="3" height="13" fill="#000"/>
<rect x="1082" y="169" width="1" height="26" fill="#0bef0b"/>
<rect x="1080" y="173" width="5" height="6" fill="#0bef0b"/>
<rect x="1081" y="174" width="3" height="4" fill="#000"/>
<rect x="1090" y="157" width="1" height="37" fill="#0bef0b"/>
<rect x="1088" y="173" width="5" height="20" fill="#0bef0b"/>
<rect x="1089" y="174" width="3" height="18" fill="#fff"/>
<rect x="1098" y="158" width="1" height="131" fill="#0bef0b"/>
<rect x="1096" y="192" width="5" height="64" fill="#0bef0b"/>
<rect x="1097" y="193" width="3" height="62" fill="#fff"/>
<rect x="1106" y="216" width="1" height="43" fill="#0bef0b"/>
<rect x="1104" y="224" width="5" height="30" fill="#0bef0b"/>
<rect x="1105" y="225" width="3" height="28" fill="#000"/>
<rect x="1114" y="223" width="1" height="17" fill="#0bef0b"/>
<rect x="1112" y="225" width="5" height="11" fill="#0bef0b"/>
<rect x="1113" y="226" width="3" height="9" fill="#fff"/>
<rect x="1122" y="234" width="1" height="30" fill="#0bef0b"/>
<rect x="1120" y="237" width="5" height="15" fill="#0bef0b"/>
<rect x="1121" y="238" width="3" height="13" fill="#fff"/>
<rect x="1130" y="234" width="1" height="24" fill="#0bef0b"/>
<rect x="1128" y="251" width="5" height="4" fill="#0bef0b"/>
<rect x="1129" y="252" width="3" height="2" fill="#fff"/>
<rect x="1138" y="232" width="1" height="39" fill="#0bef0b"/>
<rect x="1136" y="253" width="5" height="4" fill="#0bef0b"/>
<rect x="1137" y="254" width="3" height="2" fill="#fff"/>
<rect x="1146" y="174" width="1" height="88" fill="#0bef0b"/>
<rect x="1144" y="205" width="5" height="52" fill="#0bef0b"/>
<rect x="1145" y="206" width="3" height="50" fill="#000"/>
<rect x="1154" y="194" width="1" height="19" fill="#0bef0b"/>
<rect x="1152" y="205" width="5" height="5" fill="#0bef0b"/>
<rect x="1153" y="206" width="3" height="3" fill="#fff"/>
<rect x="1162" y="180" width="1" height="33" fill="#0bef0b"/>
<rect x="1160" y="180" width="5" height="30" fill="#0bef0b"/>
<rect x="1161" y="181" width="3" height="28" fill="#000"/>
<rect x="1170" y="166" width="1" height="26" fill="#0bef0b"/>
<rect x="1168" y="180" width="5" height="9" fill="#0bef0b"/>
<rect x="1169" y="181" width="3" height="7" fill="#fff"/>
<rect x="1178" y="182" width="1" height="24" fill="#0bef0b"/>
<rect x="1176" y="190" width="5" height="1" fill="#0bef0b"/>
<rect x="1186" y="182" width="1" height="33" fill="#0bef0b"/>
<rect x="1184" y="189" width="5" height="25" fill="#0bef0b"/>
<rect x="1185" y="190" width="3" height="23" fill="#fff"/>
<rect x="1194" y="119" width="1" height="111" fill="#0bef0b"/>
<rect x="1192" y="122" width="5" height="92" fill="#0bef0b"/>
<rect x="1193" y="123" width="3" height="90" fill="#000"/>
<rect x="1202" y="104" width="1" height="27" fill="#0bef0b"/>
<rect x="1200" y="113" width="5" height="10" fill="#0bef0b"/>
<rect x="1201" y="114" width="3" height="8" fill="#000"/>
<rect x="1210" y="116" width="1" height="12" fill="#0bef0b"/>
<rect x="1208" y="119" width="5" height="4" fill="#0bef0b"/>
<rect x="1209" y="120" width="3" height="2" fill="#fff"/>
<rect x="1218" y="104" width="1" height="23" fill="#0bef0b"/>
<rect x="1216" y="112" width="5" height="12" fill="#0bef0b"/>
<rect x="1217" y="113" width="3" height="10" fill="#000"/>
<rect x="1226" y="101" width="1" height="45" fill="#0bef0b"/>
<rect x="1224" y="112" width="5" height="27" fill="#0bef0b"/>
<rect x="1225" y="113" width="3" height="25" fill="#fff"/>
<rect x="1234" y="123" width="1" height="26" fill="#0bef0b"/>
<rect x="1232" y="127" width="5" height="12" fill="#0bef0b"/>
<rect x="1233" y="128" width="3" height="10" fill="#000"/>
<rect x="1242" y="97" width="1" height="47" fill="#0bef0b"/>
<rect x="1240" y="127" width="5" height="9" fill="#0bef0b"/>
<rect x="1241" y="128" width="3" height="7" fill="#fff"/>
<rect x="1250" y="110" width="1" height="27" fill="#0bef0b"/>
<rect x="1248" y="114" width="5" height="22" fill="#0bef0b"/>
<rect x="1249" y="115" width="3" height="20" fill="#000"/>
<rect x="1258" y="119" width="1" height="15" fill="#0bef0b"/>
<rect x="1256" y="121" width="5" height="6" fill="#0bef0b"/>
<rect x="1257" y="122" width="3" height="4" fill="#000"/>
<rect x="1266" y="106" width="1" height="16" fill="#0bef0b"/>
<rect x="1264" y="110" width="5" height="12" fill="#0bef0b"/>
<rect x="1265" y="111" width="3" height="10" fill="#000"/>
<rect x="1274" y="92" width="1" height="22" fill="#0bef0b"/>
<rect x="1272" y="100" width="5" height="11" fill="#0bef0b"/>
<rect x="1273" y="101" width="3" height="9" fill="#000"/>
<rect x="1282" y="83" width="1" height="31" fill="#0bef0b"/>
<rect x="1280" y="91" width="5" height="8" fill="#0bef0b"/>
<rect x="1281" y="92" width="3" height="6" fill="#000"/>
<rect x="1290" y="60" width="1" height="54" fill="#0bef0b"/>
<rect x="1288" y="91" width="5" height="23" fill="#0bef0b"/>
<rect x="1289" y="92" width="3" height="21" fill="#fff"/>
<rect x="1298" y="102" width="1" height="20" fill="#0bef0b"/>
<rect x="1296" y="106" width="5" height="8" fill="#0bef0b"/>
<rect x="1297" y="107" width="3" height="6" fill="#000"/>
<rect x="1306" y="105" width="1" height="9" fill="#0bef0b"/>
<rect x="1304" y="109" width="5" height="1" fill="#0bef0b"/>
<rect x="1314" y="109" width="1" height="15" fill="#0bef0b"/>
<rect x="1312" y="110" width="5" height="3" fill="#0bef0b"/>
<rect x="1313" y="111" width="3" height="1" fill="#fff"/>
<rect x="1322" y="89" width="1" height="25" fill="#0bef0b"/>
<rect x="1320" y="96" width="5" height="16" fill="#0bef0b"/>
<rect x="1321" y="97" width="3" height="14" fill="#000"/>
<rect x="1330" y="96" width="1" height="60" fill="#0bef0b"/>
<rect x="1328" y="96" width="5" height="42" fill="#0bef0b"/>
<rect x="1329" y="97" width="3" height="40" fill="#fff"/>
<rect x="1338" y="101" width="1" height="48" fill="#0bef0b"/>
<rect x="1336" y="120" width="5" height="18" fill="#0bef0b"/>
<rect x="1337" y="121" width="3" height="16" fill="#000"/>
<rect x="1346" y="102" width="1" height="21" fill="#0bef0b"/>
<rect x="1344" y="105" width="5" height="15" fill="#0bef0b"/>
<rect x="1345" y="106" width="3" height="13" fill="#000"/>
<rect x="1354" y="97" width="1" height="17" fill="#0bef0b"/>
<rect x="1352" y="99" width="5" height="8" fill="#0bef0b"/>
<rect x="1353" y="100" width="3" height="6" fill="#000"/>
<rect x="1362" y="92" width="1" height="20" fill="#0bef0b"/>
<rect x="1360" y="99" width="5" height="6" fill="#0bef0b"/>
<rect x="1361" y="100" width="3" height="4" fill="#fff"/>
<rect x="1370" y="95" width="1" height="15" fill="#0bef0b"/>
<rect x="1368" y="105" width="5" height="4" fill="#0bef0b"/>
<rect x="1369" y="106" width="3" height="2" fill="#fff"/>
<rect x="1378" y="98" width="1" height="30" fill="#0bef0b"/>
<rect x="1376" y="102" width="5" height="7" fill="#0bef0b"/>
<rect x="1377" y="103" width="3" height="5" fill="#000"/>
<rect x="1386" y="65" width="1" height="69" fill="#0bef0b"/>
<rect x="1384" y="72" width="5" height="30" fill="#0bef0b"/>
<rect x="1385" y="73" width="3" height="28" fill="#000"/>
<rect x="1394" y="65" width="1" height="15" fill="#0bef0b"/>
<rect x="1392" y="72" width="5" height="1" fill="#0bef0b"/>
<rect x="1402" y="58" width="1" height="20" fill="#0bef0b"/>
<rect x="1400" y="62" width="5" height="15" fill="#0bef0b"/>
<rect x="1401" y="63" width="3" height="13" fill="#000"/>
<rect x="1410" y="53" width="1" height="31" fill="#0bef0b"/>
<rect x="1408" y="62" width="5" height="12" fill="#0bef0b"/>
<rect x="1409" y="63" width="3" height="10" fill="#fff"/>
<rect x="1418" y="64" width="1" height="22" fill="#0bef0b"/>
<rect x="1416" y="74" width="5" height="6" fill="#0bef0b"/>
<rect x="1417" y="75" width="3" height="4" fill="#fff"/>
<rect x="1426" y="66" width="1" height="27" fill="#0bef0b"/>
<rect x="1424" y="76" width="5" height="4" fill="#0bef0b"/>
<rect x="1425" y="77" width="3" height="2" fill="#000"/>
<rect x="1434" y="76" width="1" height="62" fill="#0bef0b"/>
<rect x="1432" y="76" width="5" height="54" fill="#0bef0b"/>
<rect x="1433" y="77" width="3" height="52" fill="#fff"/>
<rect x="1442" y="122" width="1" height="23" fill="#0bef0b"/>
<rect x="1440" y="130" width="5" height="7" fill="#0bef0b"/>
<rect x="1441" y="131" width="3" height="5" fill="#fff"/>
<rect x="1450" y="132" width="1" height="14" fill="#0bef0b"/>
<rect x="1448" y="138" width="5" height="1" fill="#0bef0b"/>
<rect x="1458" y="138" width="1" height="17" fill="#0bef0b"/>
<rect x="1456" y="140" width="5" height="12" fill="#0bef0b"/>
<rect x="1457" y="141" width="3" height="10" fill="#fff"/>
</g>
<g fill="#fff" shape-rendering="crispEdges">
<rect x="42" y="41" width="1432" height="1"/><rect x="42" y="41" width="1" height="655"/>
<rect x="1473" y="41" width="1" height="655"/><rect x="42" y="695" width="1432" height="1"/>
<rect x="1474" y="54" width="4" height="1"/>
<rect x="1474" y="86" width="4" height="1"/>
<rect x="1474" y="119" width="4" height="1"/>
<rect x="1474" y="183" width="4" height="1"/>
<rect x="1474" y="215" width="4" height="1"/>
<rect x="1474" y="247" width="4" height="1"/>
<rect x="1474" y="279" width="4" height="1"/>
<rect x="1474" y="311" width="4" height="1"/>
<rect x="1474" y="343" width="4" height="1"/>
<rect x="1474" y="375" width="4" height="1"/>
<rect x="1474" y="407" width="4" height="1"/>
<rect x="1474" y="439" width="4" height="1"/>
<rect x="1474" y="471" width="4" height="1"/>
<rect x="1474" y="503" width="4" height="1"/>
<rect x="1474" y="535" width="4" height="1"/>
<rect x="1474" y="567" width="4" height="1"/>
<rect x="1474" y="599" width="4" height="1"/>
<rect x="1474" y="631" width="4" height="1"/>
<rect x="1474" y="663" width="4" height="1"/>
<rect x="42" y="696" width="1" height="4"/>
<rect x="106" y="696" width="1" height="4"/>
<rect x="170" y="696" width="1" height="4"/>
<rect x="234" y="696" width="1" height="4"/>
<rect x="298" y="696" width="1" height="4"/>
<rect x="362" y="696" width="1" height="4"/>
<rect x="426" y="696" width="1" height="4"/>
<rect x="490" y="696" width="1" height="4"/>
<rect x="554" y="696" width="1" height="4"/>
<rect x="618" y="696" width="1" height="4"/>
<rect x="682" y="696" width="1" height="4"/>
<rect x="746" y="696" width="1" height="4"/>
<rect x="810" y="696" width="1" height="4"/>
<rect x="874" y="696" width="1" height="4"/>
<rect x="938" y="696" width="1" height="4"/>
<rect x="1002" y="696" width="1" height="4"/>
<rect x="1066" y="696" width="1" height="4"/>
<rect x="1130" y="696" width="1" height="4"/>
<rect x="1194" y="696" width="1" height="4"/>
<rect x="1258" y="696" width="1" height="4"/>
<rect x="1322" y="696" width="1" height="4"/>
<rect x="1386" y="696" width="1" height="4"/>
<rect x="1450" y="696" width="1" height="4"/>
</g>
<text class="ax" x="1478.6" y="58">74.123</text>
<text class="ax" x="1478.6" y="90">73.486</text>
<text class="ax" x="1478.6" y="123">72.849</text>
<text class="ax" x="1478.6" y="187">71.575</text>
<text class="ax" x="1478.6" y="219">70.938</text>
<text class="ax" x="1478.6" y="251">70.301</text>
<text class="ax" x="1478.6" y="283">69.664</text>
<text class="ax" x="1478.6" y="315">69.027</text>
<text class="ax" x="1478.6" y="347">68.390</text>
<text class="ax" x="1478.6" y="379">67.753</text>
<text class="ax" x="1478.6" y="411">67.116</text>
<text class="ax" x="1478.6" y="443">66.479</text>
<text class="ax" x="1478.6" y="475">65.842</text>
<text class="ax" x="1478.6" y="507">65.205</text>
<text class="ax" x="1478.6" y="539">64.568</text>
<text class="ax" x="1478.6" y="571">63.931</text>
<text class="ax" x="1478.6" y="603">63.294</text>
<text class="ax" x="1478.6" y="635">62.657</text>
<text class="ax" x="1478.6" y="667">62.020</text>
<rect x="1476" y="146" width="34" height="11" fill="#8596a8"/>
<text class="ax" x="1478.6" y="155" style="fill:#000;stroke:#000">72.194</text>
<text class="ax" x="42.4" y="708" style="letter-spacing:0.07px">18 May 2021</text>
<text class="ax" x="106.4" y="708" style="letter-spacing:0.07px">19 May 20:00</text>
<text class="ax" x="170.4" y="708" style="letter-spacing:0.07px">21 May 04:00</text>
<text class="ax" x="234.4" y="708" style="letter-spacing:0.07px">24 May 12:00</text>
<text class="ax" x="298.4" y="708" style="letter-spacing:0.07px">25 May 20:00</text>
<text class="ax" x="362.4" y="708" style="letter-spacing:0.07px">27 May 04:00</text>
<text class="ax" x="426.4" y="708" style="letter-spacing:0.07px">28 May 12:00</text>
<text class="ax" x="490.4" y="708" style="letter-spacing:-0.17px">1 Jun 00:00</text>
<text class="ax" x="554.4" y="708" style="letter-spacing:-0.17px">2 Jun 08:00</text>
<text class="ax" x="618.4" y="708" style="letter-spacing:-0.17px">3 Jun 16:00</text>
<text class="ax" x="682.4" y="708" style="letter-spacing:-0.17px">7 Jun 00:00</text>
<text class="ax" x="746.4" y="708" style="letter-spacing:-0.17px">8 Jun 08:00</text>
<text class="ax" x="810.4" y="708" style="letter-spacing:-0.17px">9 Jun 16:00</text>
<text class="ax" x="874.4" y="708" style="letter-spacing:-0.17px">11 Jun 00:00</text>
<text class="ax" x="938.4" y="708" style="letter-spacing:-0.17px">14 Jun 08:00</text>
<text class="ax" x="1002.4" y="708" style="letter-spacing:-0.17px">15 Jun 16:00</text>
<text class="ax" x="1066.4" y="708" style="letter-spacing:-0.17px">17 Jun 00:00</text>
<text class="ax" x="1130.4" y="708" style="letter-spacing:-0.17px">18 Jun 08:00</text>
<text class="ax" x="1194.4" y="708" style="letter-spacing:-0.17px">21 Jun 16:00</text>
<text class="ax" x="1258.4" y="708" style="letter-spacing:-0.17px">23 Jun 00:00</text>
<text class="ax" x="1322.4" y="708" style="letter-spacing:-0.17px">24 Jun 08:00</text>
<text class="ax" x="1386.4" y="708" style="letter-spacing:-0.17px">25 Jun 16:00</text>
<text class="ax" x="1450.4" y="708" style="letter-spacing:-0.17px">29 Jun 00:00</text>
<g shape-rendering="crispEdges">
<rect x="46" y="45" width="15" height="12" fill="#f3eef8"/>
<rect x="47" y="45" width="13" height="1" fill="#c4c2f2"/>
<rect x="47" y="46" width="13" height="2" fill="#938fe0"/>
<rect x="48" y="49" width="5" height="1" fill="#e2695a"/><rect x="54" y="49" width="5" height="1" fill="#6464e8"/><rect x="48" y="51" width="5" height="1" fill="#e2695a"/><rect x="54" y="51" width="5" height="1" fill="#6464e8"/><rect x="48" y="53" width="5" height="1" fill="#e2695a"/><rect x="54" y="53" width="5" height="1" fill="#6464e8"/><rect x="48" y="55" width="5" height="1" fill="#e2695a"/><rect x="54" y="55" width="5" height="1" fill="#6464e8"/>
<rect x="64" y="46" width="7" height="11" fill="#4646e4"/>
<rect x="64" y="46" width="7" height="4" fill="#6060f0"/>
<rect x="71" y="46" width="7" height="11" fill="#de4c2c"/>
<rect x="71" y="46" width="7" height="4" fill="#e8705a"/>
<rect x="66" y="46" width="8" height="3" fill="#eef6f6"/>
<rect x="67" y="48" width="6" height="1" fill="#58a6a6"/>
<rect x="70" y="49" width="2" height="7" fill="#e4cdea"/>
<rect x="64" y="55" width="6" height="1" fill="#a0a0ff"/>
<rect x="72" y="55" width="6" height="1" fill="#ff9c74"/>
</g>
<text class="ax" x="84.5" y="55" textLength="181.5" lengthAdjust="spacing" style="stroke-width:0.28px">.WTISpot, H4:  Non-expiring WTI Crude Oil</text>
</svg></div>
<div class="abs" style="left:40px;top:716px;width:1483px;height:2px;background:#fff"></div>
<div class="abs" style="left:39px;top:718px;width:1484px;height:1px;background:#111"></div>
<div class="abs" style="left:40px;top:719px;width:1483px;height:1px;background:#fafafa"></div>
<div class="abs" style="left:39px;top:739px;width:1484px;height:1px;background:#dedede"></div>
<div class="abs" style="left:39px;top:740px;width:1484px;height:1px;background:#fafafa"></div>
<div class="tab" style="left:52px">USDCHF,H4</div>
<div class="tab" style="left:143.5px">GBPUSD,Daily</div>
<div class="tab" style="left:247.5px">BIDU_us,M15</div>
<div class="tab" style="left:348.5px">XAUUSD,H4</div>
<div class="tab" style="left:441px">BTCUSD,M15</div>
<div class="tab" style="left:542.5px">BABA_us,Daily</div>
<div class="tab" style="left:646.5px;letter-spacing:0.3px">US30Index,H4</div>
<div class="tab" style="left:752.5px;letter-spacing:0.37px">US500Index,H4</div>
<div class="tab" style="left:866px">EURUSD,Daily</div>
<div class="tab" style="left:970px">XAUUSD,H4</div>
<div class="tab" style="left:1062px">XAGUSD,M15</div>
<div class="sep" style="left:130px"></div>
<div class="sep" style="left:236px"></div>
<div class="sep" style="left:336px"></div>
<div class="sep" style="left:429px"></div>
<div class="sep" style="left:529px"></div>
<div class="sep" style="left:635px"></div>
<div class="sep" style="left:740px"></div>
<div class="sep" style="left:853px"></div>
<div class="sep" style="left:958px"></div>
<div class="sep" style="left:1051px"></div>
<div class="abs" style="left:1153px;top:716px;width:96px;height:24px;box-sizing:border-box;background:#fff;border:1px solid #000;border-top:none;border-bottom-width:2px;border-right-width:2px"></div>
<div class="tab" style="left:1165px;color:#000;letter-spacing:0.38px">.WTISpot,H4</div>
<div class="abs" style="left:1481px;top:724px;width:0;height:0;border-top:4.5px solid transparent;border-bottom:4.5px solid transparent;border-right:4px solid #8a8a8a"></div>
<div class="abs" style="left:1506px;top:724px;width:0;height:0;border-top:4.5px solid transparent;border-bottom:4.5px solid transparent;border-left:4px solid #8a8a8a"></div>
<div class="abs" style="left:0;top:744px;width:1520px;height:1px;background:#9f9f9f"></div>
<div class="abs" style="left:0;top:745px;width:1520px;height:22px;background:linear-gradient(#fff,#fff 45%,#f3f5f8)"></div>
<div class="abs" style="left:0;top:767px;width:1520px;height:1px;background:#d5d5d5"></div>
<div class="abs" style="left:0;top:768px;width:1520px;height:21px;background:#fff"></div>
<div class="abs" style="left:0;top:789px;width:1520px;height:1px;background:#d0d0d0"></div>
<div class="abs" style="left:0;top:790px;width:1520px;height:20px;background:#e9e9e9"></div>
<div class="abs" style="left:0;top:810px;width:1520px;height:1px;background:#d0d0d0"></div>
<div class="abs" style="left:0;top:811px;width:1520px;height:20px;background:#fff"></div>
<div class="abs" style="left:0;top:831px;width:1519px;height:4px;background:#c8c8c8"></div>
<div class="vline" style="left:4px"></div>
<div class="vline" style="left:144px"></div>
<div class="vline" style="left:319px"></div>
<div class="vline" style="left:494px"></div>
<div class="vline" style="left:669px"></div>
<div class="vline" style="left:844px"></div>
<div class="vline" style="left:1019px"></div>
<div class="vline" style="left:1194px"></div>
<div class="hd" style="right:1384px">时间</div>
<div class="hd" style="right:1209px">类型</div>
<div class="hd" style="right:1034px">交易量</div>
<div class="hd" style="right:859px">价位</div>
<div class="hd" style="right:684px">止损</div>
<div class="hd" style="right:509.5px">止盈</div>
<div class="hd" style="right:358px">价位</div>
<div class="hd" style="right:11px">盈利</div>
<div class="abs" style="left:1179px;top:754px;width:0;height:0;border-left:4px solid transparent;border-right:4px solid transparent;border-bottom:4.5px solid #222"></div>
<div class="cell" style="top:769.7px;right:1382px">2021.06.21 08:39:38</div>
<div class="cell" style="top:769.7px;right:1207px">buy</div>
<div class="cell" style="top:769.7px;right:1033px">0.5</div>
<div class="cell" style="top:769.7px;right:857.5px">1768.47</div>
<div class="cell" style="top:769.7px;right:701px">1769.00</div>
<div class="cell" style="top:769.7px;right:526px">1845.00</div>
<div class="cell" style="top:769.7px;right:332.5px">1775.23</div>
<div class="cell" style="top:769.7px;right:27px;color:#2424b8">338.00</div>
<svg class="abs" style="left:829.5px;top:774.1px" width="10" height="10" viewBox="0 0 10 10"><path d="M1.300 1.300L8.700 8.700M8.700 1.300L1.300 8.700" stroke="#8a8a8a" stroke-width="1.900"/></svg>
<svg class="abs" style="left:1004.5px;top:774.1px" width="10" height="10" viewBox="0 0 10 10"><path d="M1.300 1.300L8.700 8.700M8.700 1.300L1.300 8.700" stroke="#8a8a8a" stroke-width="1.900"/></svg>
<svg class="abs" style="left:1504px;top:774.1px" width="10" height="10" viewBox="0 0 10 10"><path d="M1.300 1.300L8.700 8.700M8.700 1.300L1.300 8.700" stroke="#8a8a8a" stroke-width="1.900"/></svg>
<div class="cell" style="top:790.6px;right:1382px">2021.06.28 04:44:18</div>
<div class="cell" style="top:790.6px;right:1207px">buy</div>
<div class="cell" style="top:790.6px;right:1033px">1</div>
<div class="cell" style="top:790.6px;right:857.5px">1771.46</div>
<div class="cell" style="top:790.6px;right:701px">1768.21</div>
<div class="cell" style="top:790.6px;right:526px">1795.43</div>
<div class="cell" style="top:790.6px;right:332.5px">1775.23</div>
<div class="cell" style="top:790.6px;right:27px;color:#2424b8">377.00</div>
<svg class="abs" style="left:829.5px;top:795.0px" width="10" height="10" viewBox="0 0 10 10"><path d="M1.300 1.300L8.700 8.700M8.700 1.300L1.300 8.700" stroke="#8a8a8a" stroke-width="1.900"/></svg>
<svg class="abs" style="left:1004.5px;top:795.0px" width="10" height="10" viewBox="0 0 10 10"><path d="M1.300 1.300L8.700 8.700M8.700 1.300L1.300 8.700" stroke="#8a8a8a" stroke-width="1.900"/></svg>
<svg class="abs" style="left:1504px;top:795.0px" width="10" height="10" viewBox="0 0 10 10"><path d="M1.300 1.300L8.700 8.700M8.700 1.300L1.300 8.700" stroke="#8a8a8a" stroke-width="1.900"/></svg>
<div class="cell" style="top:811.6px;right:1382px">2021.06.29 05:06:09</div>
<div class="cell" style="top:811.6px;right:1207px">buy</div>
<div class="cell" style="top:811.6px;right:1033px">1</div>
<div class="cell" style="top:811.6px;right:857.5px">1774.93</div>
<div class="cell" style="top:811.6px;right:526px">1785.77</div>
<div class="cell" style="top:811.6px;right:332.5px">1775.23</div>
<div class="cell" style="top:811.6px;right:27px;color:#2424b8">30.00</div>
<svg class="abs" style="left:1004.5px;top:816.0px" width="10" height="10" viewBox="0 0 10 10"><path d="M1.300 1.300L8.700 8.700M8.700 1.300L1.300 8.700" stroke="#8a8a8a" stroke-width="1.900"/></svg>
<svg class="abs" style="left:1504px;top:816.0px" width="10" height="10" viewBox="0 0 10 10"><path d="M1.300 1.300L8.700 8.700M8.700 1.300L1.300 8.700" stroke="#8a8a8a" stroke-width="1.900"/></svg>
</body></html>
